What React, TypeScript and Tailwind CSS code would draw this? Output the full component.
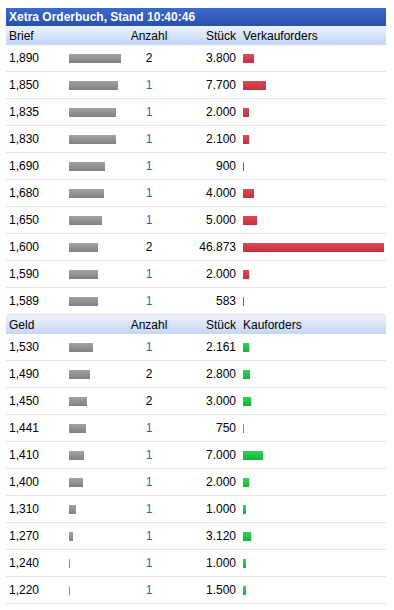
type Level = {
  price: string;
  depth: number;
  count: number;
  qty: string;
  bar: number;
};

const asks: Level[] = [
  { price: "1,890", depth: 52, count: 2, qty: "3.800", bar: 11 },
  { price: "1,850", depth: 49, count: 1, qty: "7.700", bar: 23 },
  { price: "1,835", depth: 47, count: 1, qty: "2.000", bar: 6 },
  { price: "1,830", depth: 47, count: 1, qty: "2.100", bar: 6 },
  { price: "1,690", depth: 36, count: 1, qty: "900", bar: 1 },
  { price: "1,680", depth: 35, count: 1, qty: "4.000", bar: 11 },
  { price: "1,650", depth: 33, count: 1, qty: "5.000", bar: 14 },
  { price: "1,600", depth: 29, count: 2, qty: "46.873", bar: 141 },
  { price: "1,590", depth: 29, count: 1, qty: "2.000", bar: 6 },
  { price: "1,589", depth: 29, count: 1, qty: "583", bar: 1 },
];

const bids: Level[] = [
  { price: "1,530", depth: 24, count: 1, qty: "2.161", bar: 6 },
  { price: "1,490", depth: 21, count: 2, qty: "2.800", bar: 7 },
  { price: "1,450", depth: 18, count: 2, qty: "3.000", bar: 8 },
  { price: "1,441", depth: 17, count: 1, qty: "750", bar: 1 },
  { price: "1,410", depth: 15, count: 1, qty: "7.000", bar: 20 },
  { price: "1,400", depth: 14, count: 1, qty: "2.000", bar: 6 },
  { price: "1,310", depth: 7, count: 1, qty: "1.000", bar: 3 },
  { price: "1,270", depth: 4, count: 1, qty: "3.120", bar: 8 },
  { price: "1,240", depth: 1, count: 1, qty: "1.000", bar: 3 },
  { price: "1,220", depth: 1, count: 1, qty: "1.500", bar: 3 },
];

function HeaderRow({ side, label }: { side: string; label: string }) {
  return (
    <div className="flex h-[19px] items-center bg-gradient-to-b from-[#edf3fd] to-[#c4d6f5] text-[12px] text-black">
      <div className="w-[124px] shrink-0 pl-[3px]">{side}</div>
      <div className="w-[38px] shrink-0 text-center">Anzahl</div>
      <div className="w-[71px] shrink-0 pr-[3px] text-right">Stück</div>
      <div className="pl-[4px]">{label}</div>
    </div>
  );
}

function LevelRow({ level, kind }: { level: Level; kind: "ask" | "bid" }) {
  const barColor =
    kind === "ask"
      ? "bg-gradient-to-b from-[#d94b59] to-[#c2303f]"
      : "bg-gradient-to-b from-[#2fd457] to-[#16b23c]";

  return (
    <div className="flex h-[27px] items-center border-b border-[#e6e6e6] text-[12px] text-black">
      <div className="w-[63px] shrink-0 pl-[3px]">{level.price}</div>
      <div className="w-[61px] shrink-0">
        <div
          className="h-[9px] bg-gradient-to-b from-[#a3a3a3] to-[#818181]"
          style={{ width: level.depth }}
        />
      </div>
      <div
        className={
          level.count === 1
            ? "w-[38px] shrink-0 text-center text-[#1f6cc6]"
            : "w-[38px] shrink-0 text-center text-black"
        }
      >
        {level.count}
      </div>
      <div className="w-[71px] shrink-0 pr-[3px] text-right">{level.qty}</div>
      <div className="pl-[4px]">
        <div className={`h-[9px] ${barColor}`} style={{ width: level.bar }} />
      </div>
    </div>
  );
}

export default function App() {
  return (
    <div className="min-h-[610px] bg-white pt-[8px] pl-[6px] font-['Liberation_Sans',Arial,sans-serif]">
      <div className="w-[380px]">
        <div className="flex h-[18px] items-center bg-gradient-to-b from-[#3d69c9] to-[#2a51aa] pl-[3px] text-[12px] font-bold text-white">
          Xetra Orderbuch, Stand 10:40:46
        </div>
        <HeaderRow side="Brief" label="Verkauforders" />
        {asks.map((level) => (
          <LevelRow key={level.price} level={level} kind="ask" />
        ))}
        <HeaderRow side="Geld" label="Kauforders" />
        {bids.map((level) => (
          <LevelRow key={level.price} level={level} kind="bid" />
        ))}
      </div>
    </div>
  );
}
